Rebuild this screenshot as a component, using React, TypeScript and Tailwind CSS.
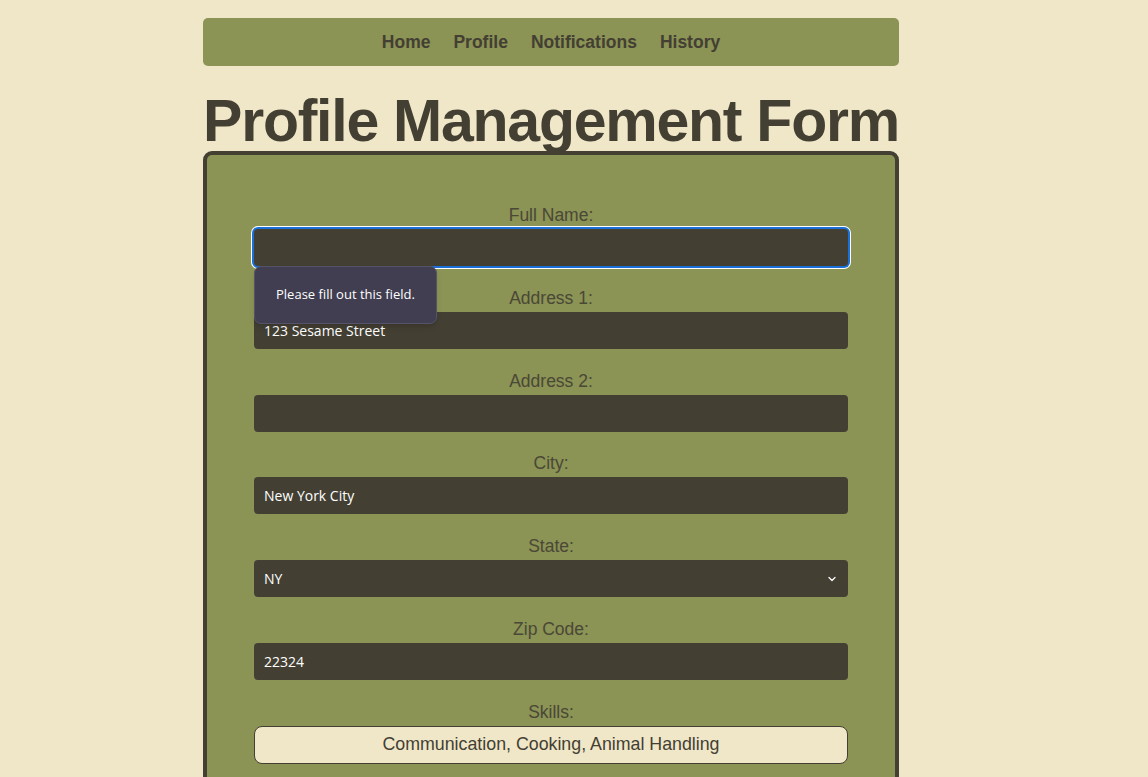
import { ChevronDown } from "lucide-react";

const arial = { fontFamily: '"Liberation Sans", Arial, sans-serif' };
const ui = { fontFamily: '"Open Sans", "Noto Sans", sans-serif' };

function Field({ label, value, focused, children }: { label: string; value?: string; focused?: boolean; children?: React.ReactNode }) {
  return (
    <div className="flex flex-col items-center">
      <label className="text-[17.5px] leading-5 text-[#4a4836] mb-[4px]">{label}</label>
      {children ?? (
        <div
          className={
            focused
              ? "w-full h-[37px] rounded-[4px] bg-[#433f33] shadow-[0_0_0_2px_#1a6fd8,0_0_0_3px_#ffffff]"
              : "w-full h-[37px] rounded-[4px] bg-[#433f33] flex items-center px-[10px]"
          }
        >
          {value && (
            <span className="text-[14px] text-white" style={ui}>
              {value}
            </span>
          )}
        </div>
      )}
    </div>
  );
}

export default function App() {
  return (
    <div className="h-[777px] bg-[#f0e6c8] overflow-hidden" style={arial}>
      <div className="w-[696px] ml-[203px] pt-[18px]">
        {/* nav */}
        <nav className="h-[48px] rounded-[5px] bg-[#8b9355] flex items-center justify-center gap-[23px] text-[17.5px] font-bold text-[#433f33]">
          <span>Home</span>
          <span>Profile</span>
          <span>Notifications</span>
          <span>History</span>
        </nav>

        <h1 className="text-[59px] leading-none font-bold text-[#433f33] text-center mt-[26px] tracking-[-1.25px] whitespace-nowrap">
          Profile Management Form
        </h1>

        {/* form */}
        <div className="border-4 border-[#433f33] rounded-[9px] bg-[#8b9355] px-[47px] pt-[50px] pb-10 flex flex-col gap-[21.8px]">
          <div className="relative">
            <Field label="Full Name:" focused />
            <div className="absolute left-0 top-[61px] w-[183px] h-[58px] rounded-[7px] bg-[#403e50] border border-[#55536a] flex items-center justify-center shadow-md z-10">
              <span className="text-[13px] text-white" style={ui}>
                Please fill out this field.
              </span>
            </div>
          </div>
          <Field label="Address 1:" value="123 Sesame Street" />
          <Field label="Address 2:" />
          <Field label="City:" value="New York City" />
          <Field label="State:">
            <div className="w-full h-[37px] rounded-[4px] bg-[#433f33] flex items-center justify-between px-[10px]">
              <span className="text-[14px] text-white" style={ui}>NY</span>
              <ChevronDown className="w-[12px] h-[12px] text-white" strokeWidth={2.5} />
            </div>
          </Field>
          <Field label="Zip Code:" value="22324" />
          <Field label="Skills:">
            <div className="w-full h-[38px] rounded-[8px] bg-[#f0e6c8] border border-[#433f33] flex items-center justify-center text-[17.8px] text-[#433f33]">
              Communication, Cooking, Animal Handling
            </div>
          </Field>
        </div>
      </div>
    </div>
  );
}
